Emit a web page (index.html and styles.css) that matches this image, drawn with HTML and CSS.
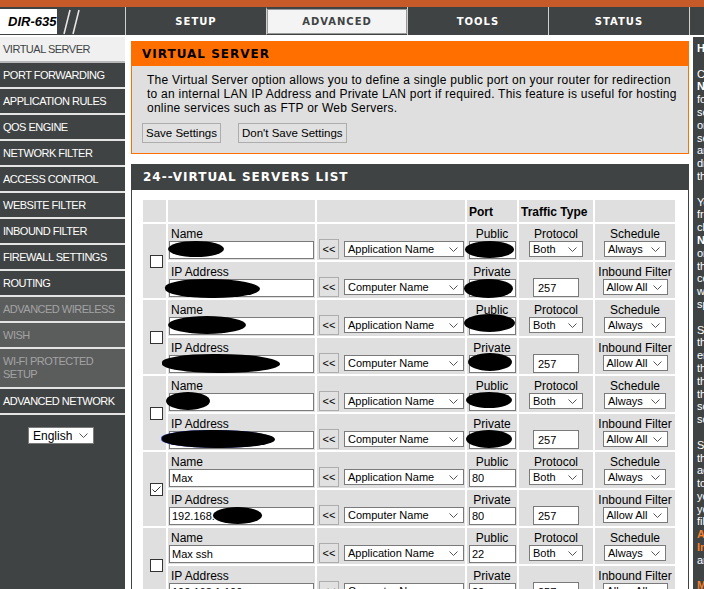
FILE: index.html
```html
<!DOCTYPE html>
<html>
<head>
<meta charset="utf-8">
<title>DIR-635 Virtual Server</title>
<link rel="stylesheet" href="styles.css">
</head>
<body>
<div class="topband"></div>
<div class="nav">
  <div class="brand">
    <div class="logo">DIR-635</div>
    <svg class="slashes" width="22" height="26" viewBox="0 0 22 26"><line x1="2" y1="25" x2="8" y2="1" stroke="#e8e8e8" stroke-width="1.6"/><line x1="11" y1="25" x2="17" y2="1" stroke="#e8e8e8" stroke-width="1.6"/></svg>
  </div>
  <div class="tab">SETUP</div>
  <div class="tab active">ADVANCED</div>
  <div class="tab">TOOLS</div>
  <div class="tab">STATUS</div>
  <div class="tab">SUPPORT</div>
</div>
<div class="layout">
  <nav class="side">
    <a class="cur">Virtual Server</a>
    <a>Port Forwarding</a>
    <a>Application Rules</a>
    <a>QoS Engine</a>
    <a>Network Filter</a>
    <a>Access Control</a>
    <a>Website Filter</a>
    <a>Inbound Filter</a>
    <a>Firewall Settings</a>
    <a>Routing</a>
    <a class="off">Advanced Wireless</a>
    <a class="off">WISH</a>
    <a class="off two">Wi-Fi Protected<br>Setup</a>
    <a>Advanced Network</a>
    <div class="lang"><span class="sel w-lang"><span>English</span><svg class="chev" width="9" height="5" viewBox="0 0 9 5"><polyline points="0.5,0.5 4.5,4.5 8.5,0.5" fill="none" stroke="#555" stroke-width="1"/></svg></span></div>
  </nav>

  <main class="main">
    <section class="box">
      <h2 class="box-h">VIRTUAL SERVER</h2>
      <div class="box-b">
        <p>The Virtual Server option allows you to define a single public port on your router for redirection to an internal LAN IP Address and Private LAN port if required. This feature is useful for hosting online services such as FTP or Web Servers.</p>
        <div class="btns"><span class="btn">Save Settings</span><span class="btn">Don't Save Settings</span></div>
      </div>
    </section>

    <section class="list">
      <h2 class="list-h">24--VIRTUAL SERVERS LIST</h2>
      <div class="list-b">
        <table class="vs">
          <colgroup><col class="c1"><col class="c2"><col class="c3"><col class="c4"><col class="c5"><col class="c6"></colgroup>
          <tr class="hdr"><td></td><td></td><td></td><td>Port</td><td>Traffic Type</td><td></td></tr>

          <!-- entry 1 -->
          <tr>
            <td class="chk" rowspan="2"><span class="cb"></span></td>
            <td class="namec"><div class="lbl">Name</div><span class="fld"><input class="txt w-name" type="text" value=""><span class="blob b-n1"></span></span></td>
            <td class="selc"><div class="selw"><span class="arr">&lt;&lt;</span><span class="sel w-app"><span>Application Name</span><svg class="chev" width="9" height="5" viewBox="0 0 9 5"><polyline points="0.5,0.5 4.5,4.5 8.5,0.5" fill="none" stroke="#555" stroke-width="1"/></svg></span></div></td>
            <td class="ctr"><div class="lbl">Public</div><span class="fld"><input class="txt w-port" type="text" value=""><span class="blob b-p1"></span></span></td>
            <td class="ctr"><div class="lbl">Protocol</div><span class="sel w-both"><span>Both</span><svg class="chev" width="9" height="5" viewBox="0 0 9 5"><polyline points="0.5,0.5 4.5,4.5 8.5,0.5" fill="none" stroke="#555" stroke-width="1"/></svg></span></td>
            <td class="ctr"><div class="lbl">Schedule</div><span class="sel w-always"><span>Always</span><svg class="chev" width="9" height="5" viewBox="0 0 9 5"><polyline points="0.5,0.5 4.5,4.5 8.5,0.5" fill="none" stroke="#555" stroke-width="1"/></svg></span></td>
          </tr>
          <tr>
            <td class="namec"><div class="lbl">IP Address</div><span class="fld"><input class="txt w-name" type="text" value=""><span class="blob b-i1"></span></span></td>
            <td class="selc"><div class="selw"><span class="arr">&lt;&lt;</span><span class="sel w-app"><span>Computer Name</span><svg class="chev" width="9" height="5" viewBox="0 0 9 5"><polyline points="0.5,0.5 4.5,4.5 8.5,0.5" fill="none" stroke="#555" stroke-width="1"/></svg></span></div></td>
            <td class="ctr"><div class="lbl">Private</div><span class="fld"><input class="txt w-port" type="text" value=""><span class="blob b-q1"></span></span></td>
            <td class="ctr bot"><input class="txt w-257" type="text" value="257"></td>
            <td class="ctr"><div class="lbl">Inbound Filter</div><span class="sel w-allow"><span>Allow All</span><svg class="chev" width="9" height="5" viewBox="0 0 9 5"><polyline points="0.5,0.5 4.5,4.5 8.5,0.5" fill="none" stroke="#555" stroke-width="1"/></svg></span></td>
          </tr>

          <!-- entry 2 -->
          <tr>
            <td class="chk" rowspan="2"><span class="cb"></span></td>
            <td class="namec"><div class="lbl">Name</div><span class="fld"><input class="txt w-name" type="text" value=""><span class="blob b-n2"></span></span></td>
            <td class="selc"><div class="selw"><span class="arr">&lt;&lt;</span><span class="sel w-app"><span>Application Name</span><svg class="chev" width="9" height="5" viewBox="0 0 9 5"><polyline points="0.5,0.5 4.5,4.5 8.5,0.5" fill="none" stroke="#555" stroke-width="1"/></svg></span></div></td>
            <td class="ctr"><div class="lbl">Public</div><span class="fld"><input class="txt w-port" type="text" value=""><span class="blob b-p2"></span></span></td>
            <td class="ctr"><div class="lbl">Protocol</div><span class="sel w-both"><span>Both</span><svg class="chev" width="9" height="5" viewBox="0 0 9 5"><polyline points="0.5,0.5 4.5,4.5 8.5,0.5" fill="none" stroke="#555" stroke-width="1"/></svg></span></td>
            <td class="ctr"><div class="lbl">Schedule</div><span class="sel w-always"><span>Always</span><svg class="chev" width="9" height="5" viewBox="0 0 9 5"><polyline points="0.5,0.5 4.5,4.5 8.5,0.5" fill="none" stroke="#555" stroke-width="1"/></svg></span></td>
          </tr>
          <tr>
            <td class="namec"><div class="lbl">IP Address</div><span class="fld"><input class="txt w-name" type="text" value=""><span class="blob b-i2"></span></span></td>
            <td class="selc"><div class="selw"><span class="arr">&lt;&lt;</span><span class="sel w-app"><span>Computer Name</span><svg class="chev" width="9" height="5" viewBox="0 0 9 5"><polyline points="0.5,0.5 4.5,4.5 8.5,0.5" fill="none" stroke="#555" stroke-width="1"/></svg></span></div></td>
            <td class="ctr"><div class="lbl">Private</div><span class="fld"><input class="txt w-port" type="text" value=""><span class="blob b-q2"></span></span></td>
            <td class="ctr bot"><input class="txt w-257" type="text" value="257"></td>
            <td class="ctr"><div class="lbl">Inbound Filter</div><span class="sel w-allow"><span>Allow All</span><svg class="chev" width="9" height="5" viewBox="0 0 9 5"><polyline points="0.5,0.5 4.5,4.5 8.5,0.5" fill="none" stroke="#555" stroke-width="1"/></svg></span></td>
          </tr>

          <!-- entry 3 -->
          <tr>
            <td class="chk" rowspan="2"><span class="cb"></span></td>
            <td class="namec"><div class="lbl">Name</div><span class="fld"><input class="txt w-name" type="text" value=""><span class="blob b-n3"></span></span></td>
            <td class="selc"><div class="selw"><span class="arr">&lt;&lt;</span><span class="sel w-app"><span>Application Name</span><svg class="chev" width="9" height="5" viewBox="0 0 9 5"><polyline points="0.5,0.5 4.5,4.5 8.5,0.5" fill="none" stroke="#555" stroke-width="1"/></svg></span></div></td>
            <td class="ctr"><div class="lbl">Public</div><span class="fld"><input class="txt w-port" type="text" value=""><span class="blob b-p3"></span></span></td>
            <td class="ctr"><div class="lbl">Protocol</div><span class="sel w-both"><span>Both</span><svg class="chev" width="9" height="5" viewBox="0 0 9 5"><polyline points="0.5,0.5 4.5,4.5 8.5,0.5" fill="none" stroke="#555" stroke-width="1"/></svg></span></td>
            <td class="ctr"><div class="lbl">Schedule</div><span class="sel w-always"><span>Always</span><svg class="chev" width="9" height="5" viewBox="0 0 9 5"><polyline points="0.5,0.5 4.5,4.5 8.5,0.5" fill="none" stroke="#555" stroke-width="1"/></svg></span></td>
          </tr>
          <tr>
            <td class="namec"><div class="lbl">IP Address</div><span class="fld"><input class="txt w-name" type="text" value=""><span class="blob b-i3"></span></span></td>
            <td class="selc"><div class="selw"><span class="arr">&lt;&lt;</span><span class="sel w-app"><span>Computer Name</span><svg class="chev" width="9" height="5" viewBox="0 0 9 5"><polyline points="0.5,0.5 4.5,4.5 8.5,0.5" fill="none" stroke="#555" stroke-width="1"/></svg></span></div></td>
            <td class="ctr"><div class="lbl">Private</div><span class="fld"><input class="txt w-port" type="text" value=""><span class="blob b-q3"></span></span></td>
            <td class="ctr bot"><input class="txt w-257" type="text" value="257"></td>
            <td class="ctr"><div class="lbl">Inbound Filter</div><span class="sel w-allow"><span>Allow All</span><svg class="chev" width="9" height="5" viewBox="0 0 9 5"><polyline points="0.5,0.5 4.5,4.5 8.5,0.5" fill="none" stroke="#555" stroke-width="1"/></svg></span></td>
          </tr>

          <!-- entry 4 -->
          <tr>
            <td class="chk" rowspan="2"><span class="cb on"><svg width="11" height="11" viewBox="0 0 11 11"><polyline points="1.5,5.5 4,8 9.5,2.5" fill="none" stroke="#333" stroke-width="1"/></svg></span></td>
            <td class="namec"><div class="lbl">Name</div><span class="fld"><input class="txt w-name" type="text" value="Max"></span></td>
            <td class="selc"><div class="selw"><span class="arr">&lt;&lt;</span><span class="sel w-app"><span>Application Name</span><svg class="chev" width="9" height="5" viewBox="0 0 9 5"><polyline points="0.5,0.5 4.5,4.5 8.5,0.5" fill="none" stroke="#555" stroke-width="1"/></svg></span></div></td>
            <td class="ctr"><div class="lbl">Public</div><span class="fld"><input class="txt w-port" type="text" value="80"></span></td>
            <td class="ctr"><div class="lbl">Protocol</div><span class="sel w-both"><span>Both</span><svg class="chev" width="9" height="5" viewBox="0 0 9 5"><polyline points="0.5,0.5 4.5,4.5 8.5,0.5" fill="none" stroke="#555" stroke-width="1"/></svg></span></td>
            <td class="ctr"><div class="lbl">Schedule</div><span class="sel w-always"><span>Always</span><svg class="chev" width="9" height="5" viewBox="0 0 9 5"><polyline points="0.5,0.5 4.5,4.5 8.5,0.5" fill="none" stroke="#555" stroke-width="1"/></svg></span></td>
          </tr>
          <tr>
            <td class="namec"><div class="lbl">IP Address</div><span class="fld"><input class="txt w-name" type="text" value="192.168."><span class="blob b-i4"></span></span></td>
            <td class="selc"><div class="selw"><span class="arr">&lt;&lt;</span><span class="sel w-app"><span>Computer Name</span><svg class="chev" width="9" height="5" viewBox="0 0 9 5"><polyline points="0.5,0.5 4.5,4.5 8.5,0.5" fill="none" stroke="#555" stroke-width="1"/></svg></span></div></td>
            <td class="ctr"><div class="lbl">Private</div><span class="fld"><input class="txt w-port" type="text" value="80"></span></td>
            <td class="ctr bot"><input class="txt w-257" type="text" value="257"></td>
            <td class="ctr"><div class="lbl">Inbound Filter</div><span class="sel w-allow"><span>Allow All</span><svg class="chev" width="9" height="5" viewBox="0 0 9 5"><polyline points="0.5,0.5 4.5,4.5 8.5,0.5" fill="none" stroke="#555" stroke-width="1"/></svg></span></td>
          </tr>

          <!-- entry 5 -->
          <tr>
            <td class="chk" rowspan="2"><span class="cb"></span></td>
            <td class="namec"><div class="lbl">Name</div><span class="fld"><input class="txt w-name" type="text" value="Max ssh"></span></td>
            <td class="selc"><div class="selw"><span class="arr">&lt;&lt;</span><span class="sel w-app"><span>Application Name</span><svg class="chev" width="9" height="5" viewBox="0 0 9 5"><polyline points="0.5,0.5 4.5,4.5 8.5,0.5" fill="none" stroke="#555" stroke-width="1"/></svg></span></div></td>
            <td class="ctr"><div class="lbl">Public</div><span class="fld"><input class="txt w-port" type="text" value="22"></span></td>
            <td class="ctr"><div class="lbl">Protocol</div><span class="sel w-both"><span>Both</span><svg class="chev" width="9" height="5" viewBox="0 0 9 5"><polyline points="0.5,0.5 4.5,4.5 8.5,0.5" fill="none" stroke="#555" stroke-width="1"/></svg></span></td>
            <td class="ctr"><div class="lbl">Schedule</div><span class="sel w-always"><span>Always</span><svg class="chev" width="9" height="5" viewBox="0 0 9 5"><polyline points="0.5,0.5 4.5,4.5 8.5,0.5" fill="none" stroke="#555" stroke-width="1"/></svg></span></td>
          </tr>
          <tr>
            <td class="namec"><div class="lbl">IP Address</div><span class="fld"><input class="txt w-name" type="text" value="192.168.1.100"></span></td>
            <td class="selc"><div class="selw"><span class="arr">&lt;&lt;</span><span class="sel w-app"><span>Computer Name</span><svg class="chev" width="9" height="5" viewBox="0 0 9 5"><polyline points="0.5,0.5 4.5,4.5 8.5,0.5" fill="none" stroke="#555" stroke-width="1"/></svg></span></div></td>
            <td class="ctr"><div class="lbl">Private</div><span class="fld"><input class="txt w-port" type="text" value="22"></span></td>
            <td class="ctr bot"><input class="txt w-257" type="text" value="257"></td>
            <td class="ctr"><div class="lbl">Inbound Filter</div><span class="sel w-allow"><span>Allow All</span><svg class="chev" width="9" height="5" viewBox="0 0 9 5"><polyline points="0.5,0.5 4.5,4.5 8.5,0.5" fill="none" stroke="#555" stroke-width="1"/></svg></span></td>
          </tr>
        </table>
      </div>
    </section>
  </main>

  <aside class="help">
    <b>Helpful Hints..</b><br><br>
    Check the <b>Application</b><br>
    <b>Name</b> drop down menu<br>
    for a list of predefined<br>
    server types. If you select<br>
    one of the predefined<br>
    server types, click the<br>
    arrow button next to the<br>
    drop down menu to fill out<br>
    the corresponding field.<br><br>
    You can select a computer<br>
    from the list of DHCP<br>
    clients in the <b>Computer</b><br>
    <b>Name</b> drop down menu,<br>
    or you can manually enter<br>
    the IP address of the<br>
    computer at which you<br>
    would like to open the<br>
    specified port.<br><br>
    Select a schedule for when<br>
    the virtual server will be<br>
    enabled. If you do not see<br>
    the schedule you need in<br>
    the list of schedules, go to<br>
    the Tools &rarr; Schedules<br>
    screen and create a new<br>
    schedule.<br><br>
    Select a filter that restricts<br>
    the Internet hosts that can<br>
    access this virtual server<br>
    to hosts that you trust. If<br>
    you do not see the filter<br>
    you need in the list of<br>
    filters, go to the<br>
    <b class="or">Advanced &rarr;</b><br>
    <b class="or">Inbound Filter</b> screen<br>
    and create a new filter.<br><br>
    <b class="or">More...</b>
  </aside>
</div>
</body>
</html>
```
FILE: styles.css
```css
html, body {
  margin: 0;
  padding: 0;
  overflow: hidden;
}
body {
  width: 704px;
  height: 589px;
  background: #fff;
  font-family: "Liberation Sans", Arial, sans-serif;
  color: #000;
}

/* top band & tabs */
.topband {
  height: 7px;
  background: #c65a28;
}
.nav {
  display: flex;
  height: 28px;
  background: #404343;
  border-bottom: 2px solid #fff;
}
.brand {
  width: 125px;
  flex: none;
  display: flex;
  align-items: center;
}
.logo {
  width: 57px;
  height: 25px;
  box-sizing: border-box;
  margin-top: 1px;
  padding-left: 8px;
  background: #fff;
  color: #000;
  font: italic bold 13px/25px "Liberation Sans", Arial, sans-serif;
}
.slashes {
  margin-left: 5px;
  margin-top: 1px;
}
.tab {
  width: 141px;
  flex: none;
  box-sizing: border-box;
  border-left: 1px solid #cfcfcf;
  display: flex;
  align-items: center;
  justify-content: center;
  color: #fff;
  font: bold 10px "DejaVu Sans", Verdana, sans-serif;
  letter-spacing: 1px;
}
.tab.active {
  background: #f4f4f4;
  color: #404343;
  border-top: 2px solid #404343;
  border-bottom: 1px solid #404343;
  box-shadow: inset 0 0 0 1px #999;
}

/* layout */
.layout {
  display: flex;
  height: 552px;
}

/* sidebar */
.side {
  width: 125px;
  flex: none;
  background: #404343;
}
.side a {
  display: block;
  height: 24px;
  line-height: 24px;
  padding-left: 3px;
  border-bottom: 2px solid #e4e4e4;
  color: #fff;
  font-size: 11px;
  letter-spacing: -0.5px;
  text-transform: uppercase;
  text-decoration: none;
  white-space: nowrap;
}
.side a.cur {
  background: #f0f0f0;
  color: #404343;
  border-bottom-color: #b9b9b9;
}
.side a.off {
  background: #5b5d5d;
  color: #a3a3a3;
}
.side a.two {
  height: auto;
  line-height: 13px;
  padding: 6px 0 6px 3px;
}
.lang {
  margin: 12px 0 0 28px;
}

/* main column */
.main {
  width: 558px;
  flex: none;
  margin-left: 6px;
  padding-top: 4px;
}
.box {
  border: 1px solid #ff6f00;
}
.box-h {
  margin: 0;
  height: 24px;
  padding-left: 10px;
  background: #ff6f00;
  color: #000;
  font: bold 12px/25px "DejaVu Sans", Verdana, sans-serif;
  letter-spacing: 1px;
}
.box-b {
  background: #dfdfdf;
  padding: 7px 10px 10px 10px;
}
.box-b p {
  margin: 0 0 8px 5px;
  font-size: 12px;
  letter-spacing: 0.25px;
  line-height: 14px;
}
.btns {
  display: flex;
  gap: 17px;
}
.btn {
  display: inline-block;
  height: 20px;
  box-sizing: border-box;
  padding: 0 3px;
  border: 1px solid #adadad;
  background: #e1e1e1;
  font-size: 11.5px;
  line-height: 18px;
}

.list {
  margin-top: 10px;
  border: 1px solid #404343;
  border-top: 0;
}
.list-h {
  margin: 0;
  height: 26px;
  padding-left: 11px;
  background: #404343;
  color: #fff;
  font: bold 12px/27px "DejaVu Sans", Verdana, sans-serif;
  letter-spacing: 1px;
}
.list-b {
  padding: 8px 0 20px 9px;
}

/* table */
.vs {
  table-layout: fixed;
  width: 536px;
  border-spacing: 2px;
}
.c1 { width: 23px; }
.c2 { width: 147px; }
.c3 { width: 148px; }
.c4 { width: 50px; }
.c5 { width: 74px; }
.c6 { width: 80px; }
.vs tr { height: 36px; }
.vs tr.hdr { height: 22px; }
.vs td {
  background: #dfdfdf;
  padding: 4px 2px 1px;
  font-size: 12px;
  vertical-align: top;
  white-space: nowrap;
}
.vs tr.hdr td {
  padding: 1px 2px 0;
  vertical-align: middle;
  font-weight: bold;
}
.vs td.namec { padding: 4px 1px 1px; }
.vs td.ctr { text-align: center; }
.vs td.bot { vertical-align: bottom; }
.vs td.selc {
  vertical-align: bottom;
  padding: 0 0 1px 2px;
}
.vs td.chk {
  vertical-align: middle;
  text-align: center;
  padding: 0 0 0 3px;
}
.lbl {
  line-height: 13px;
  padding-left: 2px;
}
.ctr .lbl { padding-left: 0; }

.cb {
  display: inline-block;
  width: 13px;
  height: 13px;
  box-sizing: border-box;
  border: 1px solid #333;
  background: #fff;
  vertical-align: middle;
}
.cb svg { display: block; }

.fld {
  position: relative;
  display: inline-block;
  vertical-align: top;
}
.txt {
  display: block;
  height: 18px;
  box-sizing: border-box;
  margin: 0;
  padding: 0 2px;
  border: 1px solid #7a7a7a;
  background: #fff;
  font: 11px "Liberation Sans", Arial, sans-serif;
  color: #000;
  outline: none;
}
.w-name { width: 145px; }
.w-port { width: 47px; }
.w-257 {
  display: inline-block;
  width: 46px;
  height: 19px;
  padding-left: 4px;
}

.selw {
  display: flex;
  align-items: center;
  gap: 5px;
}
.arr {
  width: 20px;
  height: 20px;
  box-sizing: border-box;
  border: 1px solid #adadad;
  background: #e1e1e1;
  font-size: 11px;
  line-height: 18px;
  text-align: center;
}
.sel {
  display: inline-flex;
  align-items: center;
  justify-content: space-between;
  height: 16px;
  box-sizing: border-box;
  padding: 0 5px 0 3px;
  border: 1px solid #7a7a7a;
  background: #fff;
  font-size: 11px;
  vertical-align: top;
  text-align: left;
}
.chev { flex: none; }
.w-app { width: 120px; }
.w-both { width: 54px; }
.w-always { width: 62px; }
.w-allow { width: 65px; }
.w-lang {
  width: 66px;
  height: 17px;
  font-size: 12px;
  padding-left: 4px;
}

/* redaction marks */
.blob {
  position: absolute;
  background: #000;
  border-radius: 50%;
}
.b-n1 { left: -1px; top: 0; width: 56px; height: 16px; }
.b-i1 { left: -4px; top: 0; width: 95px; height: 19px; border-radius: 45% 55% 50% 50%; }
.b-p1 { left: -4px; top: 0; width: 49px; height: 17px; }
.b-q1 { left: -5px; top: 0; width: 49px; height: 19px; }
.b-n2 { left: -1px; top: -1px; width: 78px; height: 18px; }
.b-i2 { left: -7px; top: -1px; width: 118px; height: 19px; border-radius: 45% 55% 50% 50%; }
.b-p2 { left: -5px; top: -3px; width: 51px; height: 18px; }
.b-q2 { left: -1px; top: -2px; width: 44px; height: 18px; }
.b-n3 { left: -3px; top: -1px; width: 44px; height: 18px; }
.b-i3 { left: -7px; top: -1px; width: 113px; height: 18px; border-radius: 45% 55% 50% 50%; box-shadow: -1px 0 0 #3b4fc8; }
.b-p3 { left: -3px; top: -1px; width: 46px; height: 16px; }
.b-q3 { left: -3px; top: -1px; width: 46px; height: 18px; }
.b-i4 { left: 44px; top: 0; width: 49px; height: 17px; }

/* help panel */
.help {
  flex: 1;
  min-width: 0;
  margin-left: 4px;
  padding: 5px 0 0 4px;
  background: #404343;
  color: #fff;
  font-size: 11px;
  line-height: 12.8px;
  white-space: nowrap;
  overflow: hidden;
}
.help .or { color: #f0822d; }
```
